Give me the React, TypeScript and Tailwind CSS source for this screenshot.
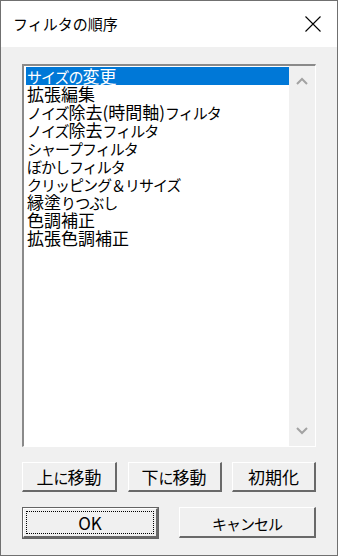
import React from 'react';

const items = [
  'サイズの変更',
  '拡張編集',
  'ノイズ除去(時間軸)フィルタ',
  'ノイズ除去フィルタ',
  'シャープフィルタ',
  'ぼかしフィルタ',
  'クリッピング＆リサイズ',
  '縁塗りつぶし',
  '色調補正',
  '拡張色調補正',
];

const font = { fontFamily: '"Noto Sans CJK JP", "Noto Sans", sans-serif' };

// kana in the old UI font are narrower than kanji, so draw those runs a bit smaller
function Jp({ text }: { text: string }) {
  const parts = text.split(/([\u3040-\u30ff\uff06]+)/).filter(Boolean);
  return (
    <>
      {parts.map((p, i) =>
        /[\u3040-\u30ff\uff06]/.test(p) ? (
          <span key={i} className="text-[15px] tracking-[-1px]">
            {p}
          </span>
        ) : (
          <span key={i}>{p}</span>
        )
      )}
    </>
  );
}

function Btn({ label, className = '' }: { label: string; className?: string }) {
  return (
    <div
      className={`flex items-center justify-center bg-[#f0f0f0] border-t border-l border-t-white border-l-white border-b-2 border-r-2 border-b-[#696969] border-r-[#696969] text-[17px] text-black leading-none ${className}`}
    >
      <span>
        <Jp text={label} />
      </span>
    </div>
  );
}

export default function App() {
  return (
    <div
      className="w-[338px] h-[556px] border border-[#707070] bg-[#f0f0f0] flex flex-col overflow-hidden"
      style={font}
    >
      {/* Title bar */}
      <div className="h-[46px] bg-white flex items-center justify-between pl-3 pr-4 shrink-0">
        <span className="text-[15px] text-black">フィルタの順序</span>
        <svg width="16" height="16" viewBox="0 0 16 16">
          <path d="M0.5 0.5 L15.5 15.5 M15.5 0.5 L0.5 15.5" stroke="#000" strokeWidth="1.1" fill="none" />
        </svg>
      </div>

      <div className="flex flex-col px-[21px] pt-[17px]">
        {/* List box */}
        <div className="h-[383px] flex border-t-2 border-l-2 border-t-[#8a8a8a] border-l-[#8a8a8a] border-b border-r border-b-white border-r-white">
          <div className="flex-1 bg-white pl-[2px] pt-[1px]">
            {items.map((it, i) => (
              <div
                key={i}
                className={`h-[18px] leading-[18px] text-[17px] whitespace-nowrap pl-[1px] ${
                  i === 0 ? 'bg-[#0078d7] text-white' : 'text-black'
                }`}
              >
                <Jp text={it} />
              </div>
            ))}
          </div>
          <div className="w-[26px] bg-[#f0f0f0] flex flex-col justify-between items-center py-[11px]">
            <svg width="12" height="8" viewBox="0 0 12 8">
              <path d="M1 7 L6 2 L11 7" stroke="#a3a3a3" strokeWidth="2" fill="none" />
            </svg>
            <svg width="12" height="8" viewBox="0 0 12 8">
              <path d="M1 1 L6 6 L11 1" stroke="#a3a3a3" strokeWidth="2" fill="none" />
            </svg>
          </div>
        </div>

        {/* Buttons row 1 */}
        <div className="flex justify-between mt-[15px]">
          <Btn label="上に移動" className="w-[95px] h-[30px]" />
          <Btn label="下に移動" className="w-[94px] h-[30px]" />
          <Btn label="初期化" className="w-[84px] h-[30px]" />
        </div>

        {/* Buttons row 2 */}
        <div className="flex justify-between mt-[15px]">
          <div className="w-[137px] h-[32px] border border-[#646464] flex">
            <div className="flex-1 flex items-center justify-center bg-[#f0f0f0] border-t border-l border-t-white border-l-white border-b-2 border-r-2 border-b-[#696969] border-r-[#696969] p-[2px]">
              <div className="w-full h-full border border-dotted border-black flex items-center justify-center text-[17px] leading-none">
                OK
              </div>
            </div>
          </div>
          <Btn label="キャンセル" className="w-[137px] h-[31px]" />
        </div>
      </div>
    </div>
  );
}
